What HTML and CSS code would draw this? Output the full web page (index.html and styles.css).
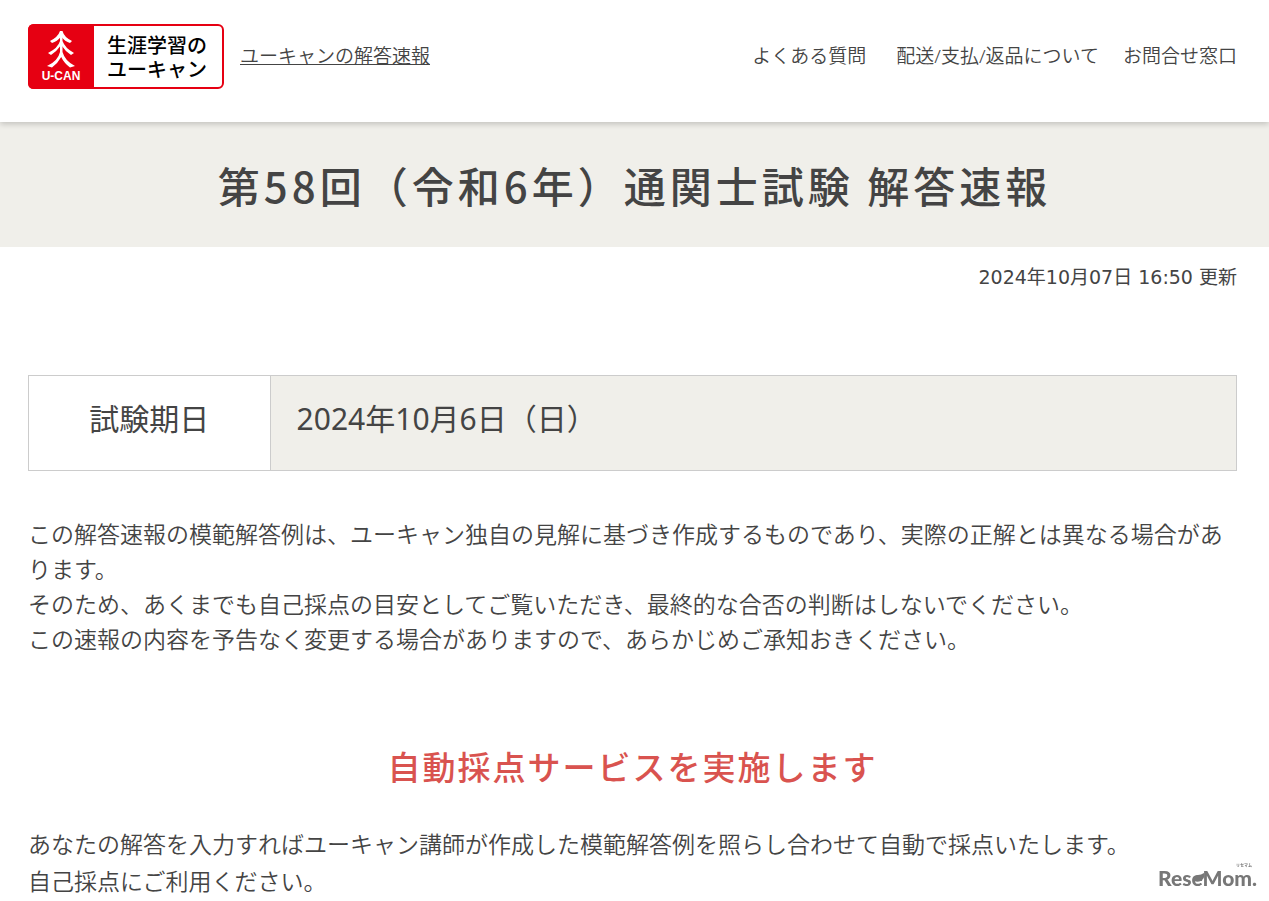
FILE: index.html
```html
<!DOCTYPE html>
<html lang="ja">
<head>
    <meta charset="UTF-8">
    <meta name="viewport" content="width=device-width, initial-scale=1.0">
    <title>第58回（令和6年）通関士試験 解答速報</title>
    <link rel="stylesheet" href="styles.css">
</head>
<body>
    <header class="header">
        <a href="#" class="logo">
            <svg width="196" height="65" viewBox="0 0 196 65" role="img" aria-label="生涯学習のユーキャン">
                <rect x="1" y="1" width="194" height="63" rx="5" fill="#fff" stroke="#e60012" stroke-width="2"/>
                <path d="M6 0H66V65H6Q0 65 0 59V6Q0 0 6 0Z" fill="#e60012"/>
                <g fill="#fff">
                    <path d="M32 7H34.500Q36 13 44 17L42 19Q37 17.500 33.200 12.500Q29 17.500 24 19L22 17Q30 13 32 7Z"/>
                    <path d="M32 12H34.500V17Q37 24 46 29L43 31Q37 27 33.200 21Q29 27 23 31L20 29Q30 24 32 17Z"/>
                    <path d="M32 20H34.500V28Q37 37 47 42L42 43.500Q36 39 33.200 33Q30 39 24 43.500L19 42Q30 37 32 28Z"/>
                </g>
                <text x="33" y="56" class="logo-mark">U-CAN</text>
                <text x="79" y="29" class="logo-text">生涯学習の</text>
                <text x="79" y="53" class="logo-text">ユーキャン</text>
            </svg>
        </a>
        <a href="#" class="site-name">ユーキャンの解答速報</a>
        <nav class="nav">
            <a href="#" class="nav-first">よくある質問</a>
            <a href="#">配送/支払/返品について</a>
            <a href="#">お問合せ窓口</a>
        </nav>
    </header>

    <div class="title">
        <h1>第58回（令和6年）通関士試験 解答速報</h1>
    </div>

    <main class="container">
        <p class="update">2024年10月07日 16:50 更新</p>

        <table class="exam">
            <tr>
                <th scope="row">試験期日</th>
                <td>2024年10月6日（日）</td>
            </tr>
        </table>

        <p class="note">この解答速報の模範解答例は、ユーキャン独自の見解に基づき作成するものであり、実際の正解とは異なる場合があります。<br>そのため、あくまでも自己採点の目安としてご覧いただき、最終的な合否の判断はしないでください。<br>この速報の内容を予告なく変更する場合がありますので、あらかじめご承知おきください。</p>

        <h2>自動採点サービスを実施します</h2>

        <p class="service">あなたの解答を入力すればユーキャン講師が作成した模範解答例を照らし合わせて自動で採点いたします。<br>自己採点にご利用ください。</p>
    </main>

    <div class="watermark">
        <svg width="100" height="28" viewBox="0 0 100 28" role="img" aria-label="ReseMom リセマム">
            <text x="0" y="22" class="watermark-name">ReseMom.</text>
            <path d="M36 17Q35 12 40 11Q43 11 46 9Q47 14 44 16Q41 19 36 17Z" fill="#777"/>
            <text x="78" y="3" class="watermark-kana">リセマム</text>
        </svg>
    </div>
</body>
</html>
```
FILE: styles.css
```css
* {
    box-sizing: border-box;
}
body {
    margin: 0;
    font-family: "Noto Sans", "Noto Sans CJK JP", sans-serif;
    font-weight: 350;
    color: #444;
    background-color: #fff;
}
a {
    color: #444;
}

/* header */
.header {
    position: relative;
    display: flex;
    align-items: flex-start;
    min-height: 122px;
    padding: 24px 32px 32px 28px;
    background-color: #fff;
    box-shadow: 0 2px 6px rgba(0, 0, 0, 0.2);
    font-size: 19px;
    line-height: 64px;
}
.logo {
    margin-right: 16px;
}
.logo svg {
    display: block;
}
.logo-mark {
    font-family: "Liberation Sans", sans-serif;
    font-size: 12px;
    font-weight: bold;
    text-anchor: middle;
    fill: #fff;
}
.logo-text {
    font-family: "Noto Sans CJK JP", sans-serif;
    font-size: 20px;
    font-weight: 500;
    fill: #000;
}
.nav {
    display: flex;
    gap: 24px;
    margin-left: auto;
}
.nav a {
    text-decoration: none;
}
.nav-first {
    margin-right: 6px;
}

/* title */
.title {
    padding: 32px 24px;
    background-color: #f0efea;
    text-align: center;
}
h1 {
    margin: 0;
    font-family: "Noto Sans CJK JP", sans-serif;
    font-size: 42px;
    font-weight: 500;
    line-height: 61px;
    letter-spacing: 4px;
}

/* contents */
.container {
    padding: 0 32px 0 28px;
}
.update {
    margin: 0 0 80px;
    padding-top: 12px;
    font-family: "DejaVu Sans", "Noto Sans CJK JP", sans-serif;
    font-size: 19px;
    font-weight: 400;
    line-height: 36px;
    text-align: right;
}
.exam {
    width: 100%;
    border-collapse: collapse;
    font-size: 30px;
    line-height: 44px;
}
.exam th,
.exam td {
    padding: 21px 26px 29px;
    border: 1px solid #ccc;
    font-weight: 400;
}
.exam th {
    width: 20%;
}
.exam td {
    background-color: #f0efea;
}
.note {
    margin: 46px 0 86px;
    font-size: 23px;
    line-height: 35px;
}
h2 {
    margin: 0 0 37px;
    font-family: "Noto Sans CJK JP", sans-serif;
    font-size: 33px;
    font-weight: 500;
    line-height: 46px;
    letter-spacing: 2px;
    text-align: center;
    color: #d9534f;
}
.service {
    margin: 0;
    font-size: 23px;
    line-height: 37px;
}
.watermark {
    position: fixed;
    right: 11px;
    bottom: 9px;
}
.watermark svg {
    display: block;
    overflow: visible;
}
.watermark-name {
    font-family: Lato, sans-serif;
    font-size: 21px;
    font-weight: 900;
    fill: #777;
}
.watermark-kana {
    font-family: "Noto Sans CJK JP", sans-serif;
    font-size: 4px;
    font-weight: bold;
    fill: #777;
}
```
